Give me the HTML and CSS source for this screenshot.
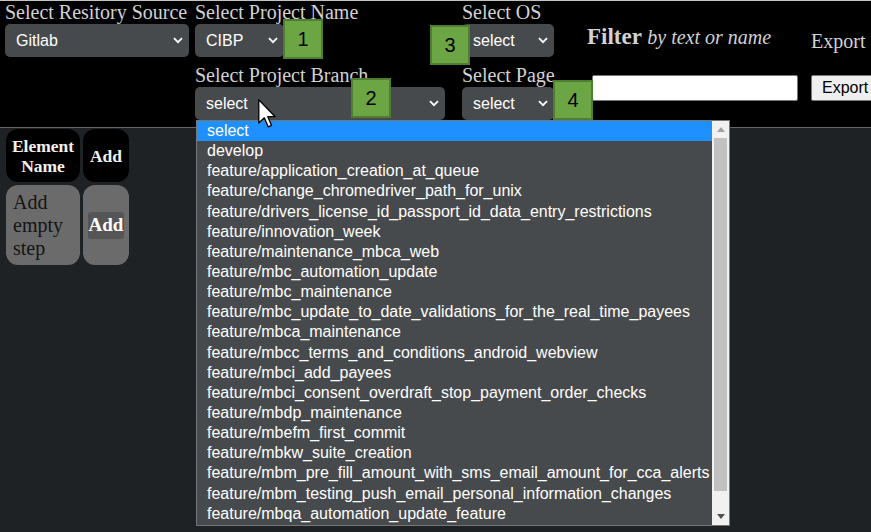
FILE: index.html
```html
<!DOCTYPE html>
<html lang="en">
<head>
<meta charset="utf-8">
<title>Steps editor</title>
<link rel="stylesheet" href="styles.css">
</head>
<body>
<div class="page">
  <header class="toolbar">
    <div class="col col-source">
      <label class="lbl">Select Resitory Source</label>
      <div class="select">
        <span>Gitlab</span>
        <svg class="chev" width="10" height="7" viewBox="0 0 10 7"><path d="M1 1.2 L5 5.2 L9 1.2" fill="none" stroke="#fff" stroke-width="1.8"/></svg>
      </div>
    </div>
    <div class="col col-project">
      <label class="lbl">Select Project Name</label>
      <div class="select select-name">
        <span>CIBP</span>
        <svg class="chev" width="10" height="7" viewBox="0 0 10 7"><path d="M1 1.2 L5 5.2 L9 1.2" fill="none" stroke="#fff" stroke-width="1.8"/></svg>
      </div>
      <label class="lbl lbl-row2">Select Project Branch</label>
      <div class="select">
        <span>select</span>
        <svg class="chev" width="10" height="7" viewBox="0 0 10 7"><path d="M1 1.2 L5 5.2 L9 1.2" fill="none" stroke="#fff" stroke-width="1.8"/></svg>
      </div>
    </div>
    <div class="col col-os">
      <label class="lbl">Select OS</label>
      <div class="select">
        <span>select</span>
        <svg class="chev" width="10" height="7" viewBox="0 0 10 7"><path d="M1 1.2 L5 5.2 L9 1.2" fill="none" stroke="#fff" stroke-width="1.8"/></svg>
      </div>
      <label class="lbl lbl-row2">Select Page</label>
      <div class="select">
        <span>select</span>
        <svg class="chev" width="10" height="7" viewBox="0 0 10 7"><path d="M1 1.2 L5 5.2 L9 1.2" fill="none" stroke="#fff" stroke-width="1.8"/></svg>
      </div>
    </div>
    <div class="col col-filter">
      <h3 class="filter-title">Filter <em>by text or name</em></h3>
      <input class="filter-input" type="text">
    </div>
    <div class="col col-export">
      <span class="export-lbl">Export</span>
      <button class="export-btn">Export</button>
    </div>
  </header>

  <main class="steps">
    <div class="cell head">Element<br>Name</div>
    <div class="cell head">Add</div>
    <div class="cell body-cell text-cell">Add<br>empty<br>step</div>
    <div class="cell body-cell"><button class="add-btn">Add</button></div>
  </main>

  <div class="badge b1">1</div>
  <div class="badge b2">2</div>
  <div class="badge b3">3</div>
  <div class="badge b4">4</div>

  <div class="dropdown">
    <ul class="options">
      <li class="active">select</li>
      <li>develop</li>
      <li>feature/application_creation_at_queue</li>
      <li>feature/change_chromedriver_path_for_unix</li>
      <li>feature/drivers_license_id_passport_id_data_entry_restrictions</li>
      <li>feature/innovation_week</li>
      <li>feature/maintenance_mbca_web</li>
      <li>feature/mbc_automation_update</li>
      <li>feature/mbc_maintenance</li>
      <li>feature/mbc_update_to_date_validations_for_the_real_time_payees</li>
      <li>feature/mbca_maintenance</li>
      <li>feature/mbcc_terms_and_conditions_android_webview</li>
      <li>feature/mbci_add_payees</li>
      <li>feature/mbci_consent_overdraft_stop_payment_order_checks</li>
      <li>feature/mbdp_maintenance</li>
      <li>feature/mbefm_first_commit</li>
      <li>feature/mbkw_suite_creation</li>
      <li>feature/mbm_pre_fill_amount_with_sms_email_amount_for_cca_alerts</li>
      <li>feature/mbm_testing_push_email_personal_information_changes</li>
      <li>feature/mbqa_automation_update_feature</li>
    </ul>
    <div class="scrollbar">
      <div class="sb-btn"><svg width="8" height="5" viewBox="0 0 8 5"><path d="M0 5 L4 0 L8 5 Z" fill="#a3a3a3"/></svg></div>
      <div class="sb-thumb"></div>
      <div class="sb-space"></div>
      <div class="sb-btn"><svg width="8" height="5" viewBox="0 0 8 5"><path d="M0 0 L4 5 L8 0 Z" fill="#505050"/></svg></div>
    </div>
  </div>

  <svg class="cursor" width="19" height="29" viewBox="0 0 13 20">
    <path d="M0.5 0.5 L0.5 16.5 L4.3 13 L7 19.2 L9.3 18.2 L6.7 12.2 L11.8 12.2 Z" fill="#fff" stroke="#000" stroke-width="0.9" stroke-linejoin="round"/>
  </svg>
</div>
</body>
</html>
```

FILE: styles.css
```css
* { box-sizing: border-box; }

html, body {
  margin: 0;
  padding: 0;
  width: 871px;
  height: 532px;
  overflow: hidden;
  background: #1f2225;
}

.page {
  position: relative;
  width: 871px;
  height: 532px;
  background: #1f2225;
  font-family: "Liberation Serif", "Times New Roman", serif;
}

.toolbar {
  display: flex;
  align-items: flex-start;
  height: 128px;
  background: #000;
  border-top: 1px solid #c4c4c4;
  border-bottom: 1px solid #666;
  padding-left: 5px;
}

.col {
  display: flex;
  flex-direction: column;
  flex-shrink: 0;
}

.col-source { width: 184px; margin-right: 6px; }
.col-project { width: 250px; margin-right: 17px; }
.col-os { width: 92px; margin-right: 33px; }
.col-filter { width: 210px; margin-right: 14px; padding-top: 23px; }
.col-export { width: 80px; padding-top: 29px; }

.lbl {
  font-size: 20px;
  line-height: 23px;
  color: #d2d2d2;
  white-space: nowrap;
}

.lbl-row2 { margin-top: 7px; }

.select {
  display: flex;
  align-items: center;
  justify-content: space-between;
  height: 33px;
  padding: 0 6px 0 11px;
  background: #474a4d;
  border-radius: 5px;
  color: #fff;
  font-family: "Liberation Sans", Arial, sans-serif;
  font-size: 16px;
}

.select-name { width: 89px; }

.chev { flex-shrink: 0; }

.filter-title {
  margin: 0;
  font-size: 23px;
  line-height: 26px;
  font-weight: bold;
  color: #d2d2d2;
  white-space: nowrap;
}

.filter-title em {
  font-weight: normal;
  font-size: 20px;
}

.filter-input {
  margin: 25px 0 0 5px;
  width: 206px;
  height: 26px;
  border: 1px solid #767676;
  border-radius: 2px;
  background: #fff;
}

.export-lbl {
  font-size: 20px;
  line-height: 23px;
  color: #d2d2d2;
}

.export-btn {
  margin-top: 22px;
  width: 72px;
  height: 26px;
  padding: 0 0 0 10px;
  text-align: left;
  background: #efefef;
  border: 1px solid #767676;
  border-radius: 2px;
  font-family: "Liberation Sans", Arial, sans-serif;
  font-size: 16px;
  color: #000;
}

.steps {
  display: grid;
  grid-template-columns: 74px 46px;
  grid-template-rows: 53px 80px;
  gap: 3px;
  padding: 1px 0 0 6px;
}

.cell {
  border-radius: 12px;
  display: flex;
  align-items: center;
}

.head {
  background: #000;
  justify-content: center;
  text-align: center;
  color: #f0f0f0;
  font-weight: bold;
  font-size: 17.5px;
  line-height: 20px;
}

.body-cell {
  background: #6b6b6b;
  justify-content: center;
}

.text-cell {
  justify-content: flex-start;
  padding-left: 7px;
  font-size: 20px;
  line-height: 23px;
  color: #141414;
}

.add-btn {
  height: 27px;
  padding: 0 1px;
  border: 0;
  border-radius: 3px;
  background: #555;
  color: #fff;
  font-family: "Liberation Serif", "Times New Roman", serif;
  font-weight: bold;
  font-size: 19px;
}

.badge {
  position: absolute;
  width: 40px;
  height: 40px;
  background: #6ca644;
  border: 2px solid #4f7d32;
  display: flex;
  align-items: center;
  justify-content: center;
  font-family: "Liberation Sans", Arial, sans-serif;
  font-size: 20px;
  color: #000;
}

.b1 { left: 283px; top: 19px; }
.b3 { left: 430px; top: 25px; }
.b2 { left: 351px; top: 78px; }
.b4 { left: 553px; top: 80px; }

.dropdown {
  position: absolute;
  left: 196px;
  top: 120px;
  width: 534px;
  height: 406px;
  border: 1px solid #767676;
  background: #474a4d;
  display: flex;
}

.options {
  list-style: none;
  margin: 0;
  padding: 0;
  flex: 1;
  overflow: hidden;
}

.options li {
  height: 20.15px;
  line-height: 20px;
  padding-left: 10px;
  color: #fff;
  font-family: "Liberation Sans", Arial, sans-serif;
  font-size: 16px;
  white-space: nowrap;
}

.options li.active { background: #1e90ff; }

.scrollbar {
  width: 17px;
  background: #f1f1f1;
  display: flex;
  flex-direction: column;
}

.sb-btn {
  height: 17px;
  display: flex;
  align-items: center;
  justify-content: center;
}

.sb-thumb {
  height: 353px;
  margin: 0 2px;
  background: #c1c1c1;
}

.sb-space { flex: 1; }

.cursor {
  position: absolute;
  left: 258px;
  top: 99px;
}
```
